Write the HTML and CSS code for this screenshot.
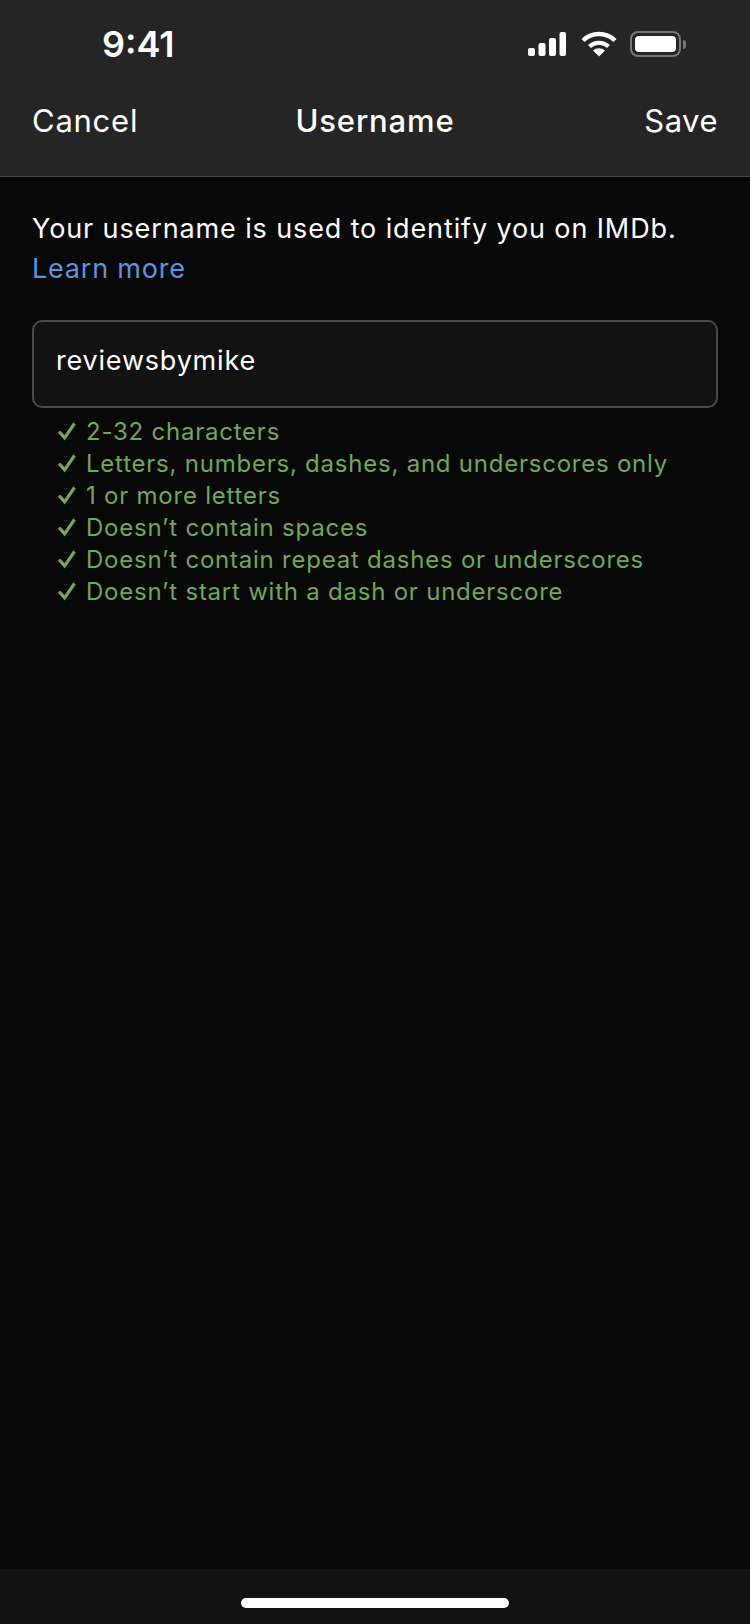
FILE: index.html
```html
<!DOCTYPE html>
<html lang="en">

<head>
    <meta charset="utf-8">
    <meta name="viewport" content="width=device-width, initial-scale=1.0">
    <title>Username</title>

    <link rel="stylesheet" href="styles.css">
</head>

<body>

    <header class="top">
        <div class="status">
            <span class="time">9:41</span>
            <div class="status-icons">
                <svg class="signal" width="38" height="24" viewBox="0 0 38 24">
                    <rect x="0" y="16" width="7" height="8" rx="2"></rect>
                    <rect x="10.5" y="11" width="7" height="13" rx="2"></rect>
                    <rect x="21" y="6" width="7" height="18" rx="2"></rect>
                    <rect x="31.5" y="0" width="6.5" height="24" rx="2"></rect>
                </svg>
                <svg class="wifi" width="36" height="26" viewBox="0 0 36 26">
                    <path d="M2 9.5 A23 23 0 0 1 34 9.5" fill="none" stroke="#fff" stroke-width="4.4"></path>
                    <path d="M8.5 15.5 A14 14 0 0 1 27.5 15.5" fill="none" stroke="#fff" stroke-width="4.2"></path>
                    <path d="M18 25.5 L12 19.5 A9 9 0 0 1 24 19.5 Z" fill="#fff"></path>
                </svg>
                <div class="battery">
                    <div class="battery-fill"></div>
                </div>
                <div class="battery-cap"></div>
            </div>
        </div>
        <nav class="bar">
            <span class="bar-link">Cancel</span>
            <h1>Username</h1>
            <span class="bar-link save">Save</span>
        </nav>
    </header>

    <main class="content">
        <p class="intro">Your username is used to identify you on IMDb. <a href="#">Learn more</a></p>
        <div class="field">reviewsbymike</div>
        <ul class="rules">
            <li><svg width="20" height="20" viewBox="0 0 20 20"><path d="M2 10.5 L7.6 16.8 L17.5 2.5"></path></svg>2-32 characters</li>
            <li><svg width="20" height="20" viewBox="0 0 20 20"><path d="M2 10.5 L7.6 16.8 L17.5 2.5"></path></svg>Letters, numbers, dashes, and underscores only</li>
            <li><svg width="20" height="20" viewBox="0 0 20 20"><path d="M2 10.5 L7.6 16.8 L17.5 2.5"></path></svg>1 or more letters</li>
            <li><svg width="20" height="20" viewBox="0 0 20 20"><path d="M2 10.5 L7.6 16.8 L17.5 2.5"></path></svg>Doesn’t contain spaces</li>
            <li><svg width="20" height="20" viewBox="0 0 20 20"><path d="M2 10.5 L7.6 16.8 L17.5 2.5"></path></svg>Doesn’t contain repeat dashes or underscores</li>
            <li><svg width="20" height="20" viewBox="0 0 20 20"><path d="M2 10.5 L7.6 16.8 L17.5 2.5"></path></svg>Doesn’t start with a dash or underscore</li>
        </ul>
    </main>

    <footer class="home">
        <div class="home-bar"></div>
    </footer>

</body>

</html>
```

FILE: styles.css
```css
* {
    box-sizing: border-box;
}

html,
body {
    margin: 0;
    height: 100%;
}

body {
    display: flex;
    flex-direction: column;
    height: 1624px;
    background-color: #080808;
    color: #fff;
    font-family: Inter, "Liberation Sans", sans-serif;
    overflow: hidden;
}

.top {
    height: 177px;
    background-color: #252525;
    border-bottom: 1px solid #444;
}

.status {
    display: flex;
    justify-content: space-between;
    align-items: center;
    height: 88px;
    padding: 0 64px 0 102px;
}

.time {
    font-size: 36px;
    font-weight: 600;
}

.status-icons {
    display: flex;
    align-items: center;
}

.signal {
    fill: #fff;
    margin-right: 15px;
}

.wifi {
    margin-right: 13px;
}

.battery {
    width: 51px;
    height: 26px;
    padding: 3px;
    border: 2px solid #777;
    border-radius: 8px;
}

.battery-fill {
    height: 100%;
    background-color: #fff;
    border-radius: 4px;
}

.battery-cap {
    width: 3px;
    height: 9px;
    margin-left: 2px;
    background-color: #777;
    border-radius: 0 3px 3px 0;
}

.bar {
    display: grid;
    grid-template-columns: 1fr auto 1fr;
    align-items: center;
    height: 64px;
    padding: 0 32px;
}

.bar h1 {
    margin: 0;
    font-size: 31px;
    font-weight: 500;
    letter-spacing: 0.85px;
}

.bar-link {
    font-size: 31px;
    font-weight: 400;
    letter-spacing: 0.75px;
}

.save {
    text-align: right;
    letter-spacing: 0.5px;
}

.content {
    flex: 1;
    padding: 32px 32px 0;
}

.intro {
    margin: 0;
    font-size: 27px;
    line-height: 40px;
    letter-spacing: 0.88px;
}

.intro a {
    display: block;
    color: #5b94e0;
    letter-spacing: 0.8px;
    text-decoration: none;
}

.field {
    display: flex;
    align-items: center;
    height: 88px;
    margin-top: 31px;
    padding: 0 22px 8px;
    background-color: #121212;
    border: 2px solid #4a4a4a;
    border-radius: 10px;
    font-size: 27px;
    letter-spacing: 0.8px;
}

.rules {
    margin: 7px 0 0;
    padding: 0 0 0 25px;
    list-style: none;
    color: #6cab55;
    font-size: 24px;
    letter-spacing: 0.77px;
}

.rules li {
    display: flex;
    align-items: center;
    gap: 9px;
    height: 32px;
}

.rules svg {
    flex: none;
    fill: none;
    stroke: #6cab55;
    stroke-width: 3.2;
}

.home {
    display: flex;
    justify-content: center;
    height: 55px;
    padding-top: 29px;
    background-color: #121212;
}

.home-bar {
    width: 268px;
    height: 10px;
    background-color: #fff;
    border-radius: 5px;
}
```
